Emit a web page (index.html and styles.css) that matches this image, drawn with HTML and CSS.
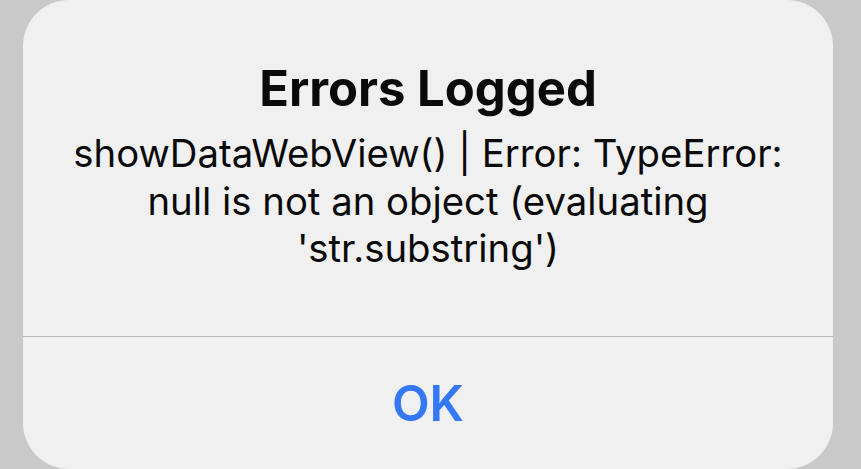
FILE: index.html
```html
<!DOCTYPE html>
<html lang="en">
<head>
  <meta charset="UTF-8" />
  <meta name="viewport" content="width=device-width, initial-scale=1.0" />
  <title>Errors Logged</title>
  <link rel="stylesheet" href="styles.css">
</head>
<body>

  <div class="alert">
    <div class="alert-content">
      <h1>Errors Logged</h1>
      <p>showDataWebView() | Error: TypeError: null is not an object (evaluating 'str.substring')</p>
    </div>
    <div class="alert-action">
      <button>OK</button>
    </div>
  </div>

</body>
</html>
```

FILE: styles.css
```css
html, body {
  margin: 0;
  height: 100%;
}

body {
  background: #c9c9c9;
  font-family: Inter, 'Noto Sans', sans-serif;
  overflow: hidden;
}

.alert {
  width: 810px;
  height: 469px;
  margin-left: 23px;
  background: #f0f0f0;
  border-radius: 46px;
  display: flex;
  flex-direction: column;
}

.alert-content {
  height: 337px;
  box-sizing: border-box;
  padding: 60px 40px 0;
  border-bottom: 1px solid #bababa;
  text-align: center;
  color: #0a0a0a;
}

.alert-content h1 {
  margin: 0;
  font-size: 49px;
  line-height: 58px;
  font-weight: 700;
}

.alert-content p {
  margin: 12px 0 0;
  font-size: 38.3px;
  line-height: 47.5px;
  font-weight: 400;
}

.alert-action {
  flex: 1;
  display: flex;
  align-items: center;
  justify-content: center;
}

.alert-action button {
  background: none;
  border: none;
  padding: 0;
  font-family: Inter, 'Noto Sans', sans-serif;
  font-size: 49px;
  font-weight: 600;
  color: #3478f6;
  cursor: pointer;
}
```
